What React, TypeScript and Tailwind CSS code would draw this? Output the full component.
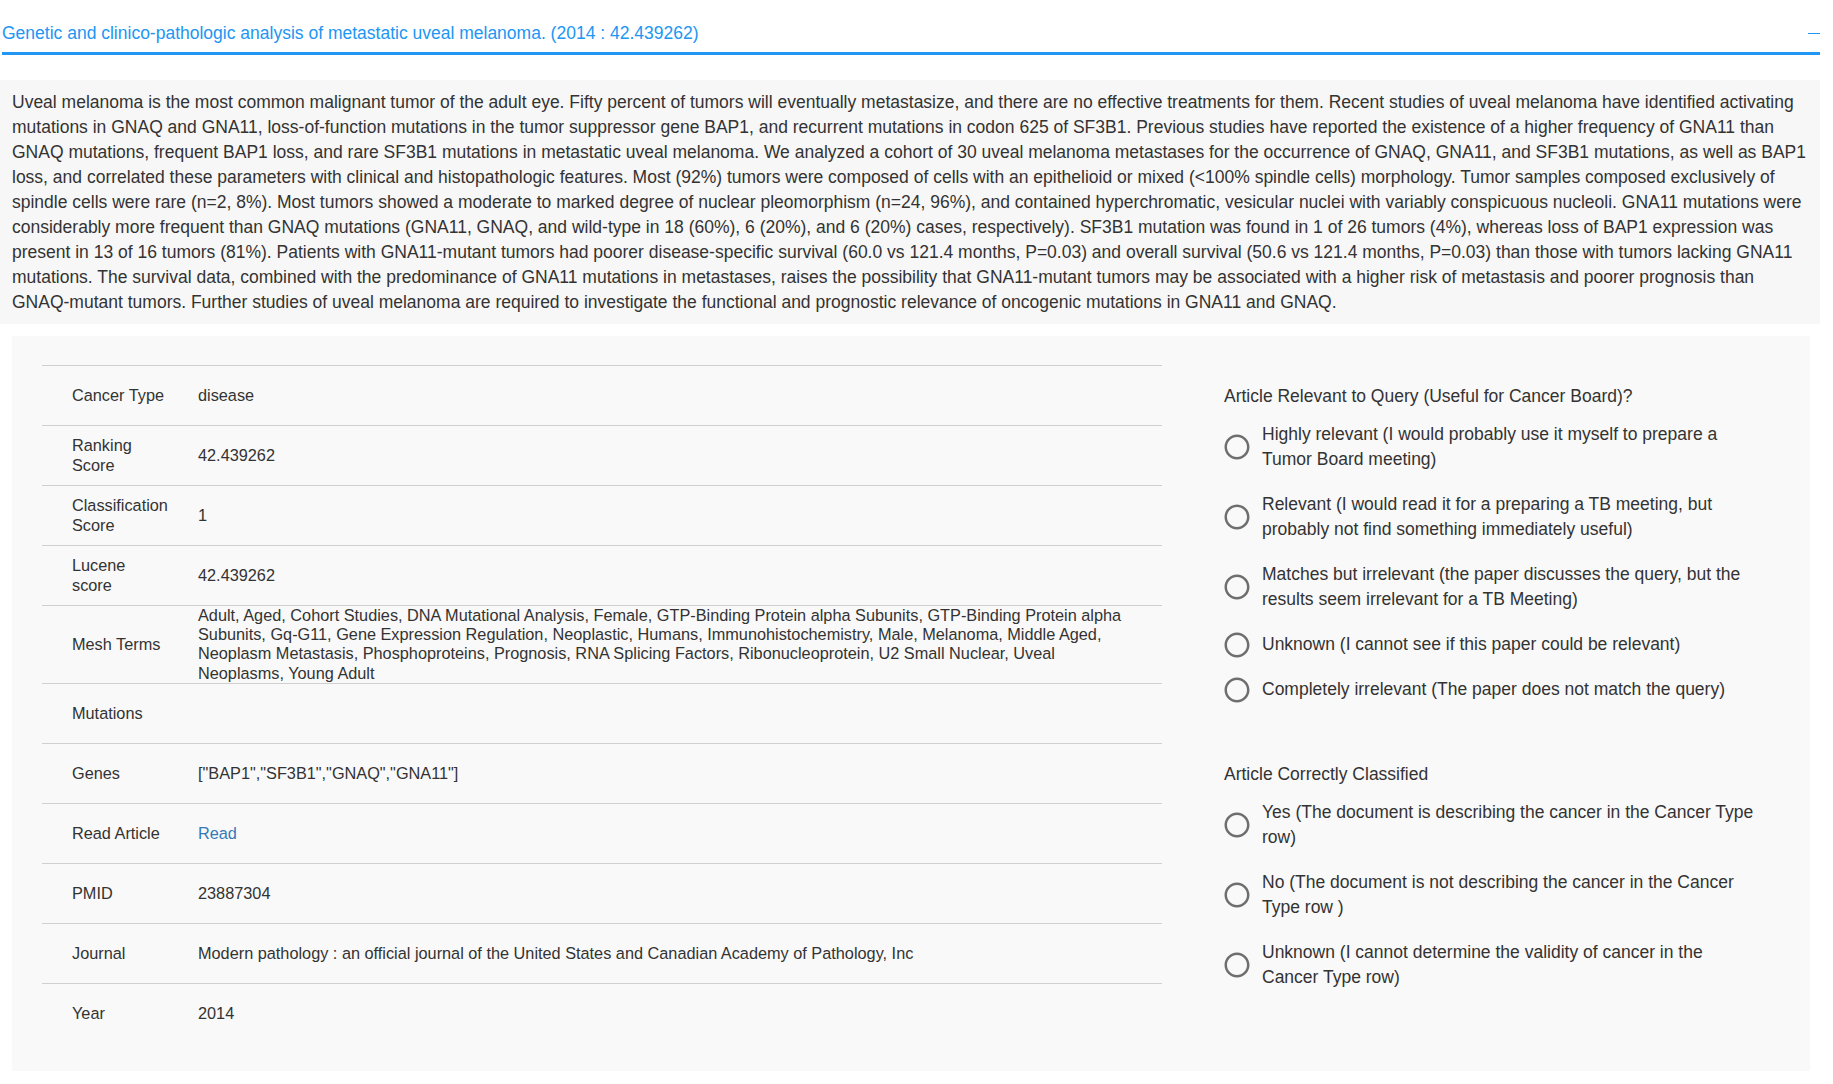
const ABSTRACT =
  "Uveal melanoma is the most common malignant tumor of the adult eye. Fifty percent of tumors will eventually metastasize, and there are no effective treatments for them. Recent studies of uveal melanoma have identified activating mutations in GNAQ and GNA11, loss-of-function mutations in the tumor suppressor gene BAP1, and recurrent mutations in codon 625 of SF3B1. Previous studies have reported the existence of a higher frequency of GNA11 than GNAQ mutations, frequent BAP1 loss, and rare SF3B1 mutations in metastatic uveal melanoma. We analyzed a cohort of 30 uveal melanoma metastases for the occurrence of GNAQ, GNA11, and SF3B1 mutations, as well as BAP1 loss, and correlated these parameters with clinical and histopathologic features. Most (92%) tumors were composed of cells with an epithelioid or mixed (<100% spindle cells) morphology. Tumor samples composed exclusively of spindle cells were rare (n=2, 8%). Most tumors showed a moderate to marked degree of nuclear pleomorphism (n=24, 96%), and contained hyperchromatic, vesicular nuclei with variably conspicuous nucleoli. GNA11 mutations were considerably more frequent than GNAQ mutations (GNA11, GNAQ, and wild-type in 18 (60%), 6 (20%), and 6 (20%) cases, respectively). SF3B1 mutation was found in 1 of 26 tumors (4%), whereas loss of BAP1 expression was present in 13 of 16 tumors (81%). Patients with GNA11-mutant tumors had poorer disease-specific survival (60.0 vs 121.4 months, P=0.03) and overall survival (50.6 vs 121.4 months, P=0.03) than those with tumors lacking GNA11 mutations. The survival data, combined with the predominance of GNA11 mutations in metastases, raises the possibility that GNA11-mutant tumors may be associated with a higher risk of metastasis and poorer prognosis than GNAQ-mutant tumors. Further studies of uveal melanoma are required to investigate the functional and prognostic relevance of oncogenic mutations in GNA11 and GNAQ."

const MESH =
  "Adult, Aged, Cohort Studies, DNA Mutational Analysis, Female, GTP-Binding Protein alpha Subunits, GTP-Binding Protein alpha Subunits, Gq-G11, Gene Expression Regulation, Neoplastic, Humans, Immunohistochemistry, Male, Melanoma, Middle Aged, Neoplasm Metastasis, Phosphoproteins, Prognosis, RNA Splicing Factors, Ribonucleoprotein, U2 Small Nuclear, Uveal Neoplasms, Young Adult"

const rows: { label: string; value: React.ReactNode }[] = [
  { label: "Cancer Type", value: "disease" },
  { label: "Ranking Score", value: "42.439262" },
  { label: "Classification Score", value: "1" },
  { label: "Lucene score", value: "42.439262" },
  { label: "Mesh Terms", value: MESH },
  { label: "Mutations", value: "" },
  { label: "Genes", value: '["BAP1","SF3B1","GNAQ","GNA11"]' },
  {
    label: "Read Article",
    value: (
      <a href="#" className="text-[#337ab7]">
        Read
      </a>
    ),
  },
  { label: "PMID", value: "23887304" },
  {
    label: "Journal",
    value: "Modern pathology : an official journal of the United States and Canadian Academy of Pathology, Inc",
  },
  { label: "Year", value: "2014" },
]

const relevance = [
  "Highly relevant (I would probably use it myself to prepare a Tumor Board meeting)",
  "Relevant (I would read it for a preparing a TB meeting, but probably not find something immediately useful)",
  "Matches but irrelevant (the paper discusses the query, but the results seem irrelevant for a TB Meeting)",
  "Unknown (I cannot see if this paper could be relevant)",
  "Completely irrelevant (The paper does not match the query)",
]

const classified = [
  "Yes (The document is describing the cancer in the Cancer Type row)",
  "No (The document is not describing the cancer in the Cancer Type row )",
  "Unknown (I cannot determine the validity of cancer in the Cancer Type row)",
]

function RadioOption({ text }: { text: string }) {
  return (
    <label className="flex items-center cursor-pointer">
      <svg className="-ml-[2px] w-[30px] h-[30px] shrink-0 text-[#6e6e6e]" viewBox="0 0 24 24" fill="currentColor">
        <path d="M12 2C6.48 2 2 6.48 2 12s4.48 10 10 10 10-4.48 10-10S17.52 2 12 2zm0 18c-4.42 0-8-3.58-8-8s3.58-8 8-8 8 3.58 8 8-3.58 8-8 8z" />
      </svg>
      <span className="ml-[10px] w-[497px] py-[10px] text-[17.5px] leading-[25px] text-[#333]">{text}</span>
    </label>
  )
}

export default function App() {
  return (
    <div className="min-h-screen bg-white pr-[13px] font-['Liberation_Sans',Arial,sans-serif] text-[#333]">
      {/* Title bar */}
      <div className="ml-[2px] flex items-center justify-between pt-[20px] pb-[6px] border-b-[3px] border-[#2196f3]">
        <span className="text-[17.5px] leading-[26px] text-[#2196f3]">
          Genetic and clinico-pathologic analysis of metastatic uveal melanoma. (2014 : 42.439262)
        </span>
        <span className="block w-[12px] h-px bg-[#2196f3]" />
      </div>

      {/* Abstract */}
      <div className="mt-[25px] bg-[#f7f7f7] pl-[12px] pr-[6px] pt-[10px] pb-[9px] text-[17.5px] leading-[25px] text-[#333]">
        {ABSTRACT}
      </div>

      {/* Details + rating */}
      <div className="mt-[12px] ml-[12px] mr-[10px] bg-[#f9f9f9] pt-[29px] pb-[28px] flex">
        <div className="ml-[30px] w-[1120px] shrink-0 text-[16.3px] leading-[19.2px]">
          {rows.map((r) => (
            <div key={r.label} className="flex items-center min-h-[60px] border-t border-[#d0d0d0]">
              <div className="w-[156px] shrink-0 pl-[30px] pr-[29px]">{r.label}</div>
              <div className="flex-1 pr-[37px]">{r.value}</div>
            </div>
          ))}
        </div>

        <div className="ml-[62px] pt-[19px]">
          <div className="text-[17.5px] leading-[25px] mb-[3px]">Article Relevant to Query (Useful for Cancer Board)?</div>
          {relevance.map((t) => (
            <RadioOption key={t} text={t} />
          ))}
          <div className="mt-[50px] text-[17.5px] leading-[25px] mb-[3px]">Article Correctly Classified</div>
          {classified.map((t) => (
            <RadioOption key={t} text={t} />
          ))}
        </div>
      </div>
    </div>
  )
}
